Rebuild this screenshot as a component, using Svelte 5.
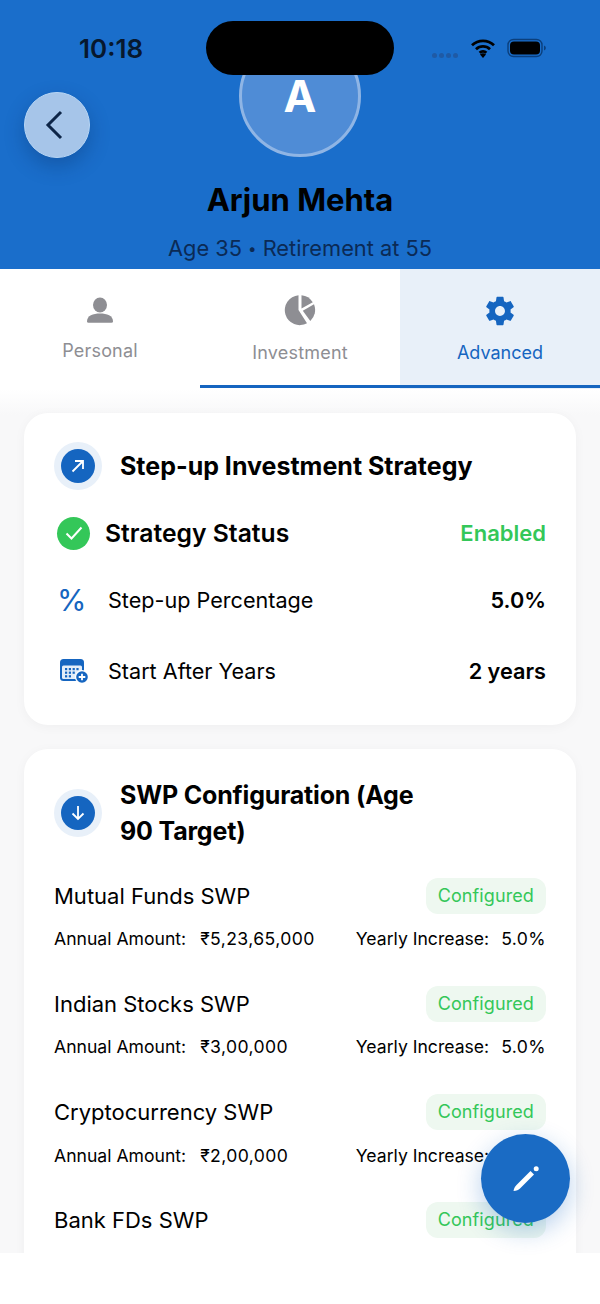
<script>
  const rows = [
    { name: 'Mutual Funds SWP', amount: '₹5,23,65,000', inc: '5.0%' },
    { name: 'Indian Stocks SWP', amount: '₹3,00,000', inc: '5.0%' },
    { name: 'Cryptocurrency SWP', amount: '₹2,00,000', inc: '5.0%' },
    { name: 'Bank FDs SWP' }
  ];
</script>

<div class="screen">
  <header class="hero">
    <div class="status">
      <span class="time">10:18</span>
      <div class="status-right">
        <span class="dots"><i></i><i></i><i></i><i></i></span>
        <svg class="wifi" width="26" height="20" viewBox="0 0 26 20"><path d="M2 7.200a16 16 0 0 1 22 0M6 11.200a10.200 10.200 0 0 1 14 0M9.600 14.800a5 5 0 0 1 6.800 0" fill="none" stroke="#000" stroke-width="2.800"/><path d="M13 20l-3-3.400a4.400 4.400 0 0 1 6 0z" fill="#000"/></svg>
        <svg class="battery" width="40" height="20" viewBox="0 0 40 20"><rect x="1" y="1.500" width="34" height="17" rx="5.500" fill="none" stroke="#0b3f7c" stroke-width="1.400"/><rect x="3" y="3.500" width="30" height="13" rx="4" fill="#000"/><path d="M37 7.500a2.600 2.600 0 0 1 0 5z" fill="#0b3f7c"/></svg>
      </div>
    </div>
    <div class="island"></div>
    <button class="back" aria-label="Back">
      <svg width="24" height="32" viewBox="0 0 24 32"><path d="M18 3L5 16l13 13" fill="none" stroke="#0d2547" stroke-width="3"/></svg>
    </button>
    <div class="avatar">A</div>
    <h1>Arjun Mehta</h1>
    <p class="sub">Age 35 <span class="sep">•</span> Retirement at 55</p>
  </header>

  <nav class="tabs">
    <div class="tab personal">
      <svg width="34" height="34" viewBox="0 0 34 34"><ellipse cx="17" cy="11" rx="7" ry="7.600" fill="#8e8e93"/><path d="M4 27.500c0-6 6-8 13-8s13 2 13 8c0 .8-.6 1.200-1.400 1.200H5.400C4.600 28.700 4 28.300 4 27.500z" fill="#8e8e93"/></svg>
      <span>Personal</span>
    </div>
    <div class="tab">
      <svg width="34" height="34" viewBox="0 0 34 34" fill="#8e8e93"><path d="M15.500 1.200A15 15 0 1 0 24 29.300L15.500 16z"/><path d="M18.500 1.200A15 15 0 0 1 29.800 8.200L18.500 14.500z"/><path d="M19.800 16.800L31 10.200A15 15 0 0 1 27.300 26.900z"/></svg>
      <span>Investment</span>
    </div>
    <div class="tab active">
      <svg width="34" height="34" viewBox="0 0 24 24"><path fill="#1565c0" d="M19.430 12.980c.04-.32.07-.64.07-.98s-.03-.66-.07-.98l2.110-1.650c.19-.15.24-.42.12-.64l-2-3.460c-.12-.22-.39-.3-.61-.22l-2.490 1c-.52-.4-1.080-.73-1.690-.98l-.38-2.650A.488.488 0 0 0 14 2h-4c-.25 0-.46.180-.49.420l-.38 2.650c-.61.250-1.170.590-1.690.980l-2.490-1c-.23-.090-.49 0-.61.220l-2 3.460c-.13.220-.07.490.12.640l2.110 1.650c-.04.320-.07.650-.07.980s.03.660.07.980l-2.110 1.650c-.19.150-.24.420-.12.640l2 3.460c.12.220.39.300.61.220l2.490-1c.52.400 1.080.730 1.690.980l.38 2.650c.03.240.24.420.49.420h4c.25 0 .46-.180.49-.420l.38-2.650c.61-.250 1.170-.590 1.690-.980l2.490 1c.23.090.49 0 .61-.220l2-3.460c.12-.220.07-.490-.12-.640l-2.110-1.650zM12 15.500c-1.930 0-3.500-1.570-3.500-3.500s1.570-3.500 3.500-3.500 3.500 1.570 3.500 3.500-1.570 3.500-3.500 3.500z"/></svg>
      <span>Advanced</span>
    </div>
    <div class="indicator"></div>
  </nav>

  <main class="content">
    <section class="card first">
      <div class="card-head">
        <span class="badge">
          <svg width="16" height="16" viewBox="0 0 16 16"><path d="M2.500 13.500L13 3M5 3h8v8" fill="none" stroke="#fff" stroke-width="1.800"/></svg>
        </span>
        <h2>Step-up Investment Strategy</h2>
      </div>
      <div class="status-row">
        <span class="check">
          <svg width="20" height="20" viewBox="0 0 20 20"><path d="M2.500 10.500l5 5 10-11" fill="none" stroke="#fff" stroke-width="2"/></svg>
        </span>
        <strong>Strategy Status</strong>
        <span class="enabled">Enabled</span>
      </div>
      <div class="row pct">
        <span class="row-icon percent">%</span>
        <span class="row-label">Step-up Percentage</span>
        <b>5.0%</b>
      </div>
      <div class="row years">
        <span class="row-icon">
          <svg width="30" height="26" viewBox="0 0 30 26"><rect x="1" y="1" width="24" height="22" rx="3.500" fill="#1565c0"/><rect x="3" y="7.500" width="20" height="13.500" rx="1.500" fill="#e3edf8"/><g fill="#1565c0"><rect x="6" y="10" width="2.200" height="2.200"/><rect x="9.800" y="10" width="2.200" height="2.200"/><rect x="13.600" y="10" width="2.200" height="2.200"/><rect x="17.400" y="10" width="2.200" height="2.200"/><rect x="6" y="13.600" width="2.200" height="2.200"/><rect x="9.800" y="13.600" width="2.200" height="2.200"/><rect x="13.600" y="13.600" width="2.200" height="2.200"/><rect x="6" y="17.200" width="2.200" height="2.200"/><rect x="9.800" y="17.200" width="2.200" height="2.200"/></g><circle cx="23" cy="19" r="7" fill="#fff"/><circle cx="23" cy="19" r="5.800" fill="#1565c0"/><path d="M23 15.700v6.600M19.700 19h6.600" stroke="#fff" stroke-width="1.800"/></svg>
        </span>
        <span class="row-label">Start After Years</span>
        <b>2 years</b>
      </div>
    </section>

    <section class="card second">
      <div class="card-head swp">
        <span class="badge">
          <svg width="18" height="18" viewBox="0 0 18 18"><path d="M9 2v13M3.500 9.500L9 15l5.500-5.500" fill="none" stroke="#fff" stroke-width="1.800"/></svg>
        </span>
        <h2>SWP Configuration (Age<br />90 Target)</h2>
      </div>
      {#each rows as r}
        <div class="swp-item">
          <div class="swp-top">
            <span class="swp-name">{r.name}</span>
            <span class="pill">Configured</span>
          </div>
          {#if r.amount}
            <div class="swp-bottom">
              <span class="amount"><em>Annual Amount:</em><u>{r.amount}</u></span>
              <span><em>Yearly Increase:</em><u>{r.inc}</u></span>
            </div>
          {/if}
        </div>
      {/each}
    </section>
  </main>

  <button class="fab" aria-label="Edit">
    <svg width="30" height="30" viewBox="0 0 30 30" fill="#fff"><path d="M2.500 27C3 24 4 22.500 5.500 21L19.500 7 23 10.500 9 24.500C7.500 26 5.500 26.800 2.500 27z"/><circle cx="25.200" cy="4.800" r="2.500"/></svg>
  </button>
</div>

<style>
  :global(body) { margin: 0; background: #fff; }
  .screen {
    position: relative;
    width: 600px;
    height: 1304px;
    overflow: hidden;
    background: #fff;
    font-family: Inter, "Noto Sans", sans-serif;
    color: #000;
  }
  .hero {
    position: relative;
    height: 269px;
    background: #1a6ecb;
    display: flex;
    flex-direction: column;
    align-items: center;
    padding-top: 35px;
    box-sizing: border-box;
  }
  .status { position: absolute; inset: 0 0 auto 0; height: 96px; }
  .time {
    position: absolute; left: 79px; top: 34px;
    font-size: 26px; font-weight: 600; line-height: 30px; color: #07182e;
  }
  .status-right { position: absolute; left: 432px; top: 38px; display: flex; align-items: center; }
  .dots { display: flex; gap: 2px; margin-top: 14px; margin-right: 10px; width: 28px; }
  .dots i { width: 5px; height: 5px; border-radius: 50%; background: #1f5aa5; }
  .wifi { margin-right: 11px; }
  .island {
    position: absolute; left: 206px; top: 21px; width: 188px; height: 54px;
    border-radius: 27px; background: #000; z-index: 2;
  }
  .back {
    position: absolute; left: 24px; top: 92px; width: 66px; height: 66px;
    padding: 0; border-radius: 50%; border: 1px solid #b7d6f5;
    background: #a6c5e9; display: flex; align-items: center; justify-content: center;
    box-shadow: 0 8px 20px rgba(8, 40, 90, .3);
  }
  .back svg { margin-left: -4px; }
  .avatar {
    width: 122px; height: 122px; box-sizing: border-box; flex: none;
    border-radius: 50%; border: 3px solid #8fb5e5; background: #4f8cd6;
    color: #fff; font-size: 44px; font-weight: 700;
    display: flex; align-items: center; justify-content: center;
    line-height: 1;
  }
  h1 { margin: 24px 0 0; font-size: 31px; line-height: 38px; font-weight: 700; color: #000; }
  .sub { margin: 15px 0 0; font-size: 21.800px; line-height: 28px; color: #0b2a55; }
  .sep { font-size: 15px; vertical-align: 2px; }

  .tabs { position: relative; display: flex; height: 120px; background: #fff; }
  .tab {
    flex: 1; display: flex; flex-direction: column; align-items: center;
    padding-top: 25px; box-sizing: border-box;
    font-size: 18px; color: #8e8e93; letter-spacing: .2px;
  }
  .tab span { margin-top: 14px; line-height: 22px; }
  .tab.personal span { margin-top: 12px; }
  .tab.active { background: #e8f0f9; color: #1565c0; letter-spacing: 0; }
  .indicator { position: absolute; left: 200px; width: 400px; top: 116px; height: 3px; background: #1565c0; }

  .content {
    height: 864px;
    background: linear-gradient(#fff 0, #f8f8f9 26px);
    overflow: hidden;
    padding: 24px 24px 0; box-sizing: border-box;
  }
  .card {
    background: #fff; border-radius: 24px; padding: 29px 30px 30px;
    box-shadow: 0 2px 12px rgba(0, 0, 0, .04);
  }
  .first { height: 312px; box-sizing: border-box; margin-bottom: 24px; }
  .card-head { display: flex; align-items: center; gap: 18px; }
  .badge {
    width: 48px; height: 48px; flex: none; border-radius: 50%; background: #e8f0f9;
    display: flex; align-items: center; justify-content: center; position: relative;
  }
  .badge::before {
    content: ""; position: absolute; left: 7px; top: 7px; width: 34px; height: 34px;
    border-radius: 50%; background: #1565c0;
  }
  .badge svg { position: relative; }
  h2 { margin: 0; font-size: 25px; line-height: 36px; font-weight: 700; }
  .swp h2 { letter-spacing: -.18px; }
  .status-row { display: flex; align-items: center; margin-top: 23px; height: 40px; }
  .check {
    width: 33px; height: 33px; margin-left: 3px; border-radius: 50%; background: #34c759;
    display: flex; align-items: center; justify-content: center;
  }
  .status-row strong { margin-left: 15px; font-size: 24.700px; font-weight: 600; flex: 1; }
  .enabled { font-size: 22px; font-weight: 600; color: #34c759; }
  .row { display: flex; align-items: center; height: 32px; }
  .row.pct { margin-top: 31px; }
  .row.years { margin-top: 39px; }
  .row-icon { width: 54px; flex: none; padding-left: 5px; box-sizing: border-box; display: flex; align-items: center; }
  .percent { font-size: 30px; color: #1565c0; font-weight: 400; padding-left: 3px; }
  .row-label { flex: 1; font-size: 21.600px; }
  .row b { font-size: 21.700px; font-weight: 600; }

  .second { padding-top: 30px; padding-bottom: 0; min-height: 600px; }
  .card-head.swp { margin-bottom: 28.500px; margin-top: -2px; }
  .swp-item { height: 108.300px; }
  .swp-top { display: flex; justify-content: space-between; align-items: center; height: 36px; }
  .swp-name { font-size: 22px; }
  .pill {
    font-size: 18px; color: #34c759; background: #eef8f0; border-radius: 12px;
    padding: 0 12px; height: 36px; line-height: 36px; letter-spacing: .1px;
  }
  .swp-bottom { display: flex; justify-content: space-between; margin-top: 13.500px; font-size: 17.600px; line-height: 24px; }
  .swp-bottom em { font-style: normal; }
  .swp-bottom u { text-decoration: none; margin-left: 12px; letter-spacing: .4px; }
  .swp-bottom .amount u { margin-left: 14px; }

  .fab {
    position: absolute; left: 481px; top: 1134px; width: 89px; height: 89px; padding: 0;
    border: 0; border-radius: 50%; background: #1a6bc4;
    display: flex; align-items: center; justify-content: center;
    box-shadow: 0 8px 24px rgba(21, 101, 192, .3);
  }
</style>
